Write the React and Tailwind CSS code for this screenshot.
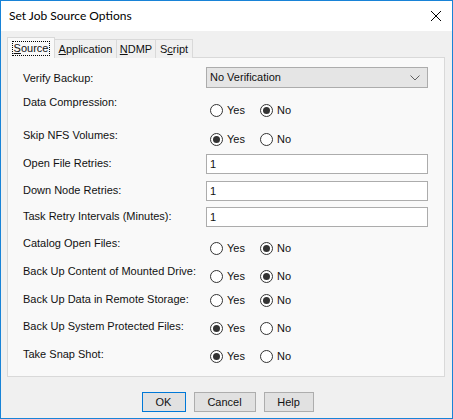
import React from "react";

const rows = [
  { label: "Verify Backup:", h: 27, lm: 3, cm: 0, type: "select" },
  { label: "Data Compression:", h: 33, lm: 0, cm: 9, type: "radio", yes: false },
  { label: "Skip NFS Volumes:", h: 27, lm: 0, cm: 5, type: "radio", yes: true },
  { label: "Open File Retries:", h: 27, lm: 1, cm: 0, type: "input" },
  { label: "Down Node Retries:", h: 26, lm: 1, cm: 0, type: "input" },
  { label: "Task Retry Intervals (Minutes):", h: 28, lm: 1, cm: 0, type: "input" },
  { label: "Catalog Open Files:", h: 28, lm: 0, cm: 6, type: "radio", yes: false },
  { label: "Back Up Content of Mounted Drive:", h: 28, lm: 0, cm: 6, type: "radio", yes: false },
  { label: "Back Up Data in Remote Storage:", h: 27, lm: 0, cm: 2, type: "radio", yes: false },
  { label: "Back Up System Protected Files:", h: 28, lm: 0, cm: 3, type: "radio", yes: true },
  { label: "Take Snap Shot:", h: 28, lm: 0, cm: 3, type: "radio", yes: true },
];

function Radio({ on }) {
  return (
    <span className="w-[13px] h-[13px] rounded-full border border-[#333333] bg-white flex items-center justify-center shrink-0">
      {on && <span className="w-[7px] h-[7px] rounded-full bg-[#333333]" />}
    </span>
  );
}

function Control({ r }) {
  if (r.type === "select") {
    return (
      <div className="w-[222px] h-[21px] bg-[#e5e5e5] border border-[#acacac] flex items-center justify-between pl-[3px] pr-[6px]">
        <span>No Verification</span>
        <svg width="10" height="6" viewBox="0 0 10 6" className="mr-[1px]">
          <path d="M0.5 0.5 L5 5 L9.5 0.5" fill="none" stroke="#606060" strokeWidth="1" />
        </svg>
      </div>
    );
  }
  if (r.type === "input") {
    return (
      <div className="w-[222px] h-[20px] bg-white border border-[#acacac] flex items-center pl-[3px]">
        1
      </div>
    );
  }
  return (
    <div className="flex items-center h-[14px] pl-[4px]">
      <Radio on={r.yes} />
      <span className="ml-[4px] w-[33px]">Yes</span>
      <Radio on={!r.yes} />
      <span className="ml-[4px]">No</span>
    </div>
  );
}

export default function App() {
  return (
    <div
      className="w-[453px] h-[419px] bg-[#f0f0f0] border border-[#1883d7] flex flex-col text-[11px] text-[#111]"
      style={{ fontFamily: '"Liberation Sans", Arial, sans-serif' }}
    >
      <div className="h-[30px] bg-white flex items-center justify-between pl-[8px] pr-[10px] shrink-0">
        <span className="text-[12px] text-black" style={{ fontFamily: 'Lato, "Noto Sans", sans-serif' }}>
          Set Job Source Options
        </span>
        <svg width="12" height="12" viewBox="0 0 12 12">
          <path d="M1 1 L11 11 M11 1 L1 11" stroke="#000" strokeWidth="1" />
        </svg>
      </div>
      <div className="flex-1 flex flex-col px-[6px] pt-[6px]">
        <div className="flex items-end h-[21px] relative z-10">
          <div className="h-[21px] w-[48px] border border-[#d9d9d9] border-b-0 bg-[#f9f9f9] flex items-center justify-center">
            <span className="border border-dotted border-black px-[1px] leading-[13px]">
              <u>S</u>ource
            </span>
          </div>
          <div className="h-[19px] w-[62px] border border-[#d9d9d9] border-l-0 border-b-0 bg-[#f0f0f0] flex items-center justify-center pt-[1px]">
            <span><u>A</u>pplication</span>
          </div>
          <div className="h-[19px] w-[39px] border border-[#d9d9d9] border-l-0 border-b-0 bg-[#f0f0f0] flex items-center justify-center pt-[1px]">
            <span><u>N</u>DMP</span>
          </div>
          <div className="h-[19px] w-[37px] border border-[#d9d9d9] border-l-0 border-b-0 bg-[#f0f0f0] flex items-center justify-center pt-[1px]">
            <span>S<u>c</u>ript</span>
          </div>
        </div>
        <div className="h-[320px] w-[438px] border border-[#d9d9d9] bg-[#f9f9f9] pl-[15px] pt-[9px] flex flex-col -mt-[1px]">
          {rows.map((r, i) => (
            <div key={i} className="flex shrink-0" style={{ height: r.h }}>
              <div className="w-[183px]" style={{ marginTop: r.lm }}>
                <span className="leading-[14px]">{r.label}</span>
              </div>
              <div style={{ marginTop: r.cm }}>
                <Control r={r} />
              </div>
            </div>
          ))}
        </div>
        <div className="flex justify-center gap-[8px] mt-[15px] pl-[2px]">
          <button className="w-[44px] h-[20px] bg-[#e1e1e1] border border-[#0078d7]">OK</button>
          <button className="w-[62px] h-[20px] bg-[#e1e1e1] border border-[#adadad]">Cancel</button>
          <button className="w-[50px] h-[20px] bg-[#e1e1e1] border border-[#adadad]">Help</button>
        </div>
      </div>
    </div>
  );
}
